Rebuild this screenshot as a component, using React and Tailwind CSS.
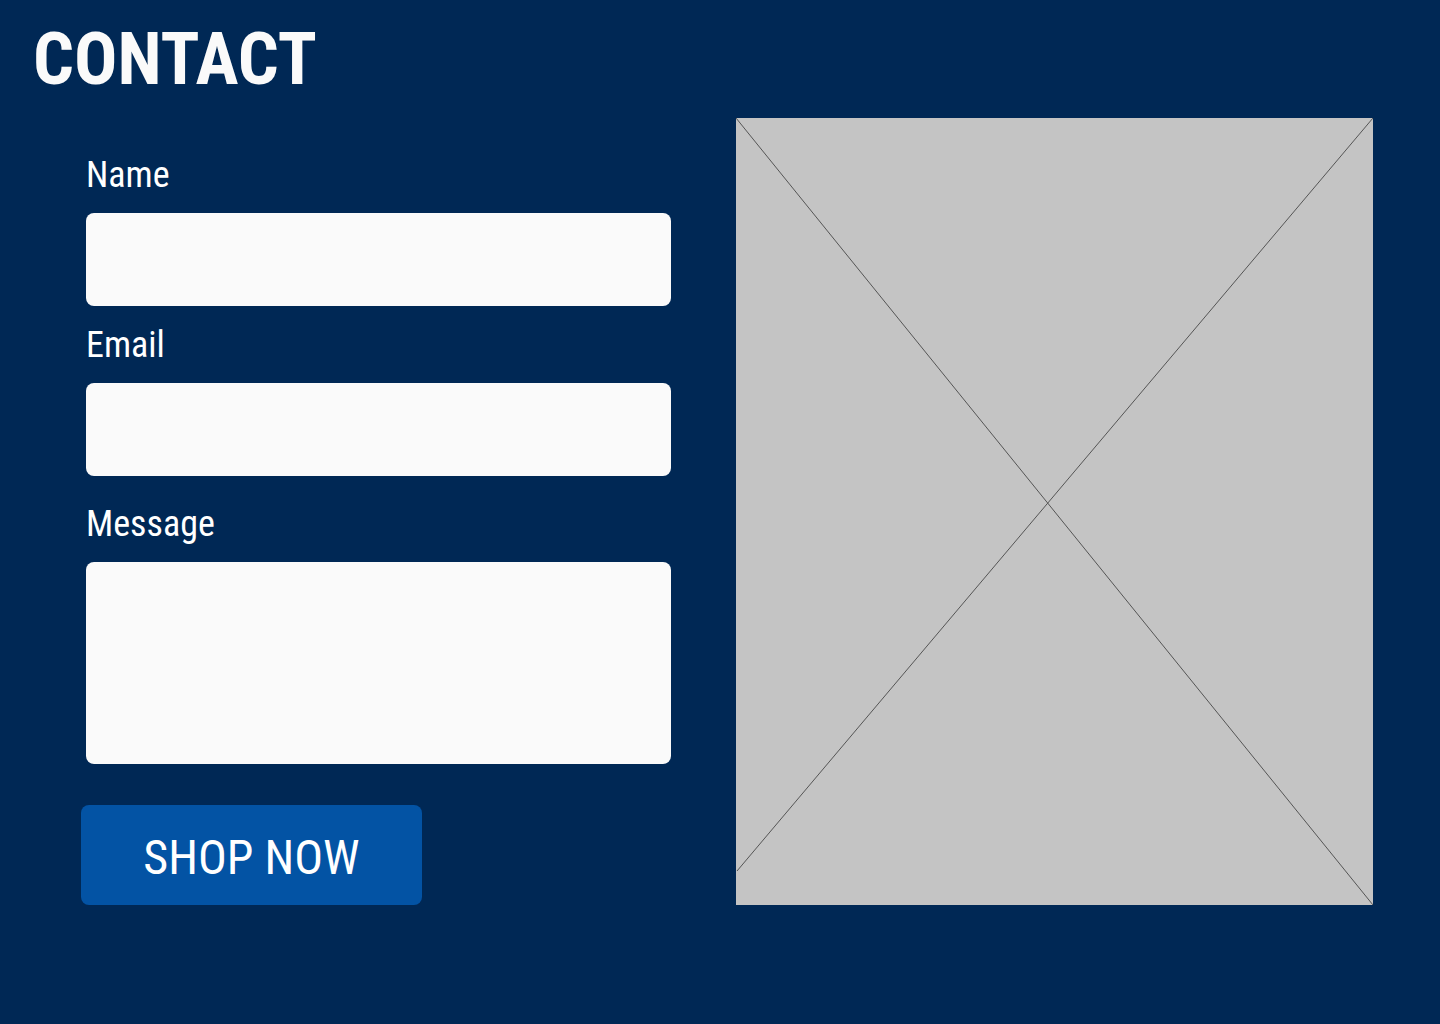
const font = { fontFamily: '"Roboto Condensed", Roboto, sans-serif' }

function Field({ label, tall, className = '' }) {
  return (
    <div className={`flex flex-col ${className}`}>
      <label className="pl-[5px] text-[36px] leading-[36px] text-white">{label}</label>
      <div className={`mt-5 ml-[5px] w-[585px] rounded-lg bg-[#fafafa] ${tall ? 'h-[202px]' : 'h-[93px]'}`} />
    </div>
  )
}

export default function App() {
  return (
    <div className="min-h-screen bg-[#002855] px-8 pt-6" style={font}>
      <h1 className="pl-px text-[72px] font-bold leading-[72px] text-[#fafafa]">CONTACT</h1>

      <div className="mt-[22px] flex gap-[65px] pl-[49px]">
        <form className="flex w-[590px] flex-col pt-[39px]" onSubmit={e => e.preventDefault()}>
          <Field label="Name" />
          <Field label="Email" className="mt-[21px]" />
          <Field label="Message" tall className="mt-[30px]" />
          <button
            type="submit"
            className="mt-[41px] h-[100px] w-[341px] rounded-lg bg-[#0353a4] pt-[5px] text-[48px] leading-none text-white"
          >
            SHOP NOW
          </button>
        </form>

        <div className="h-[787px] w-[637px] bg-[#c4c4c4]">
          <svg width="637" height="787" viewBox="0 0 637 787" className="block">
            <line x1="0" y1="0" x2="637" y2="787" stroke="#555" strokeWidth="1" />
            <line x1="637" y1="0" x2="1" y2="753" stroke="#555" strokeWidth="1" />
          </svg>
        </div>
      </div>
    </div>
  )
}
